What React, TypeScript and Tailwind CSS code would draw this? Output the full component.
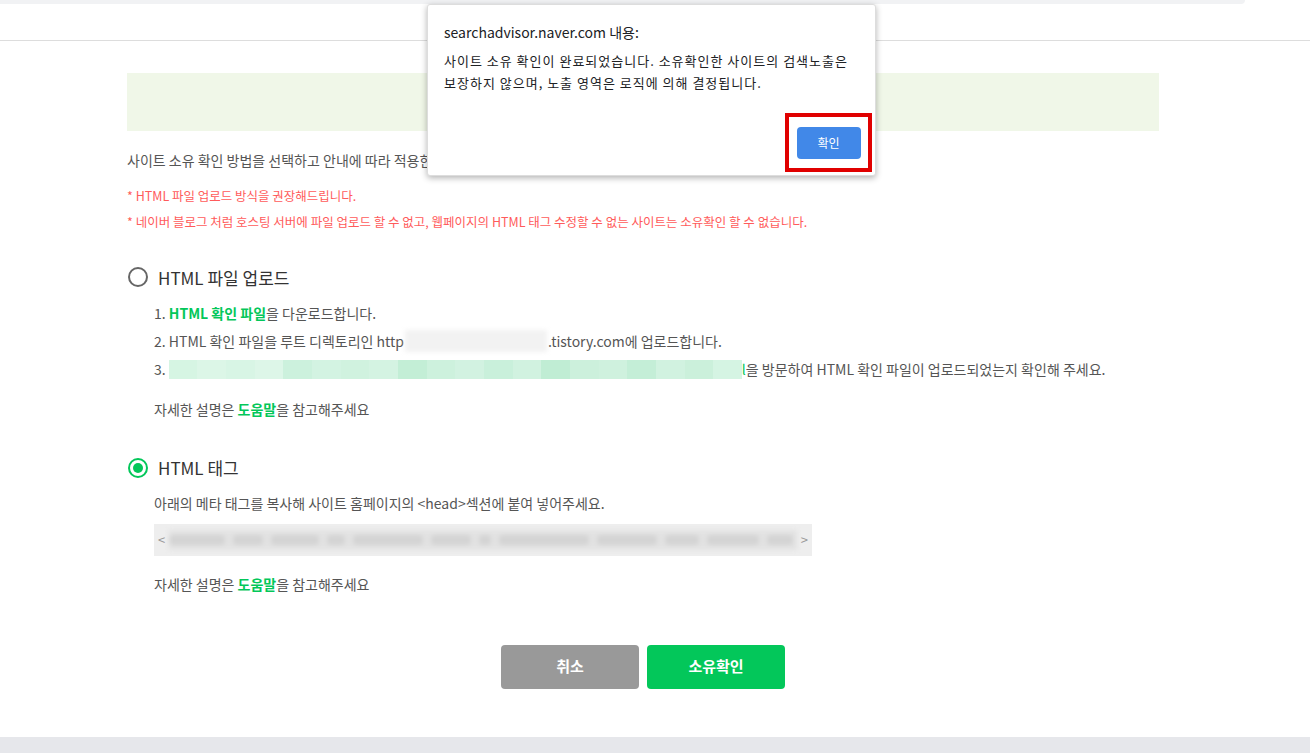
import React from "react";

const font = { fontFamily: '"Noto Sans CJK KR", "Noto Sans", sans-serif' };

const greenBlocks = [
    "#d6f5e3", "#dcf6e7", "#d8f5e5", "#ddf6e8", "#ccf1dd", "#d3f3e2", "#d0f2df",
    "#d4f3e2", "#c3eed6", "#cdf1dd", "#d2f2e1", "#c9f0db", "#d1f2e0", "#c0edd4",
    "#ccf0dc", "#cff1de", "#c4eed7", "#d1f2e0", "#cbf0db", "#d5f4e3",
];

const grayBlocks = [56, 30, 48, 18, 70, 40, 12, 90, 60, 34, 52, 26];

function Radio({ checked }: { checked?: boolean }) {
    return checked ? (
        <span className="flex h-5 w-5 items-center justify-center rounded-full border-[2.5px] border-[#03c75a]">
            <span className="h-2.5 w-2.5 rounded-full bg-[#03c75a]" />
        </span>
    ) : (
        <span className="h-5 w-5 rounded-full border-2 border-[#666]" />
    );
}

function Help() {
    return (
        <p className="text-[14px] text-[#555]">
            자세한 설명은 <span className="font-semibold text-[#03c75a]">도움말</span>을 참고해주세요
        </p>
    );
}

export default function App() {
    return (
        <div className="relative min-h-[753px] bg-white" style={font}>
            <header className="h-[41px] border-b border-[#ddd]">
                <div className="h-1 w-[1245px] rounded-br-lg bg-[#f1f2f4]" />
            </header>

            <main className="ml-[127px] w-[1032px] pt-8">
                <div className="h-[58px] bg-[#f0f7e8]" />

                <p className="mt-[19px] text-[14px] text-[#555]">
                    사이트 소유 확인 방법을 선택하고 안내에 따라 적용한 후 소유확인 버튼을 클릭해주세요.
                </p>
                <div className="mt-[16px] space-y-[7px] text-[12.5px] text-[#ff5b5b]">
                    <p>* HTML 파일 업로드 방식을 권장해드립니다.</p>
                    <p>
                        * 네이버 블로그 처럼 호스팅 서버에 파일 업로드 할 수 없고, 웹페이지의 HTML 태그 수정할 수 없는 사이트는 소유확인 할 수 없습니다.
                    </p>
                </div>

                <section className="mt-[33px]">
                    <div className="flex items-center gap-[10px] pl-[1px]">
                        <Radio />
                        <span className="text-[17px] text-[#333]">HTML 파일 업로드</span>
                    </div>
                    <ol className="mt-[12px] space-y-[6px] pl-[27px] text-[14px] text-[#555]">
                        <li className="leading-[22px]">
                            1. <span className="font-semibold text-[#03c75a]">HTML 확인 파일</span>을 다운로드합니다.
                        </li>
                        <li className="flex items-center leading-[22px]">
                            2. HTML 확인 파일을 루트 디렉토리인 http
                            <span className="mx-[1px] inline-block h-[22px] w-[142px] bg-[#f2f2f2] blur-[2px]" />
                            .tistory.com에 업로드합니다.
                        </li>
                        <li className="flex items-center leading-[22px]">
                            3.&nbsp;
                            <span className="flex h-[19px] w-[573px]">
                                {greenBlocks.map((c, i) => (
                                    <span key={i} className="h-full flex-1" style={{ background: c }} />
                                ))}
                            </span>
                            <span className="text-[#03c75a]">l</span>을 방문하여 HTML 확인 파일이 업로드되었는지 확인해 주세요.
                        </li>
                    </ol>
                    <div className="mt-[19px] pl-[27px]">
                        <Help />
                    </div>
                </section>

                <section className="mt-[35px]">
                    <div className="flex items-center gap-[10px] pl-[1px]">
                        <Radio checked />
                        <span className="text-[17px] text-[#333]">HTML 태그</span>
                    </div>
                    <div className="pl-[27px]">
                        <p className="mt-[12px] text-[14px] text-[#555]">
                            아래의 메타 태그를 복사해 사이트 홈페이지의 &lt;head&gt;섹션에 붙여 넣어주세요.
                        </p>
                        <div className="mt-[10px] flex h-[32px] w-[658px] items-center gap-1 bg-[#eee] px-[4px] text-[13px] text-[#999]">
                            <span>&lt;</span>
                            <span className="flex h-[20px] min-w-0 flex-1 items-center gap-2 overflow-hidden bg-[#e2e2e2] blur-[2px]">
                                {grayBlocks.map((w, i) => (
                                    <span key={i} className="h-[10px] shrink-0 rounded bg-[#d4d4d4]" style={{ width: w }} />
                                ))}
                            </span>
                            <span>&gt;</span>
                        </div>
                        <div className="mt-[18px]">
                            <Help />
                        </div>
                    </div>
                </section>

                <div className="mt-[50px] flex gap-2 pl-[374px]">
                    <button className="h-[44px] w-[138px] rounded bg-[#999] text-[15px] font-bold text-white">
                        취소
                    </button>
                    <button className="h-[44px] w-[138px] rounded bg-[#03c75a] text-[15px] font-bold text-white">
                        소유확인
                    </button>
                </div>
            </main>

            <footer className="absolute bottom-0 left-0 h-4 w-full bg-[#e6e7eb]" />

            {/* browser alert */}
            <div className="absolute left-[427px] top-[4px] h-[172px] w-[449px] rounded-[3px] border border-[#ddd] bg-white px-4 shadow-[0_2px_6px_rgba(0,0,0,0.3)]">
                <p className="mt-[17px] text-[14px] text-[#202124]">searchadvisor.naver.com 내용:</p>
                <p className="mt-[7px] text-[13px] leading-[22px] tracking-[1px] text-[#202124]">
                    사이트 소유 확인이 완료되었습니다. 소유확인한 사이트의 검색노출은 보장하지 않으며, 노출 영역은 로직에 의해 결정됩니다.
                </p>
                <div className="absolute right-[3px] top-[108px] flex h-[59px] w-[87px] items-center justify-center border-[4px] border-[#e00000]">
                    <button className="h-[32px] w-[64px] rounded-[4px] bg-[#4188e8] text-[12px] text-white">
                        확인
                    </button>
                </div>
            </div>
        </div>
    );
}
